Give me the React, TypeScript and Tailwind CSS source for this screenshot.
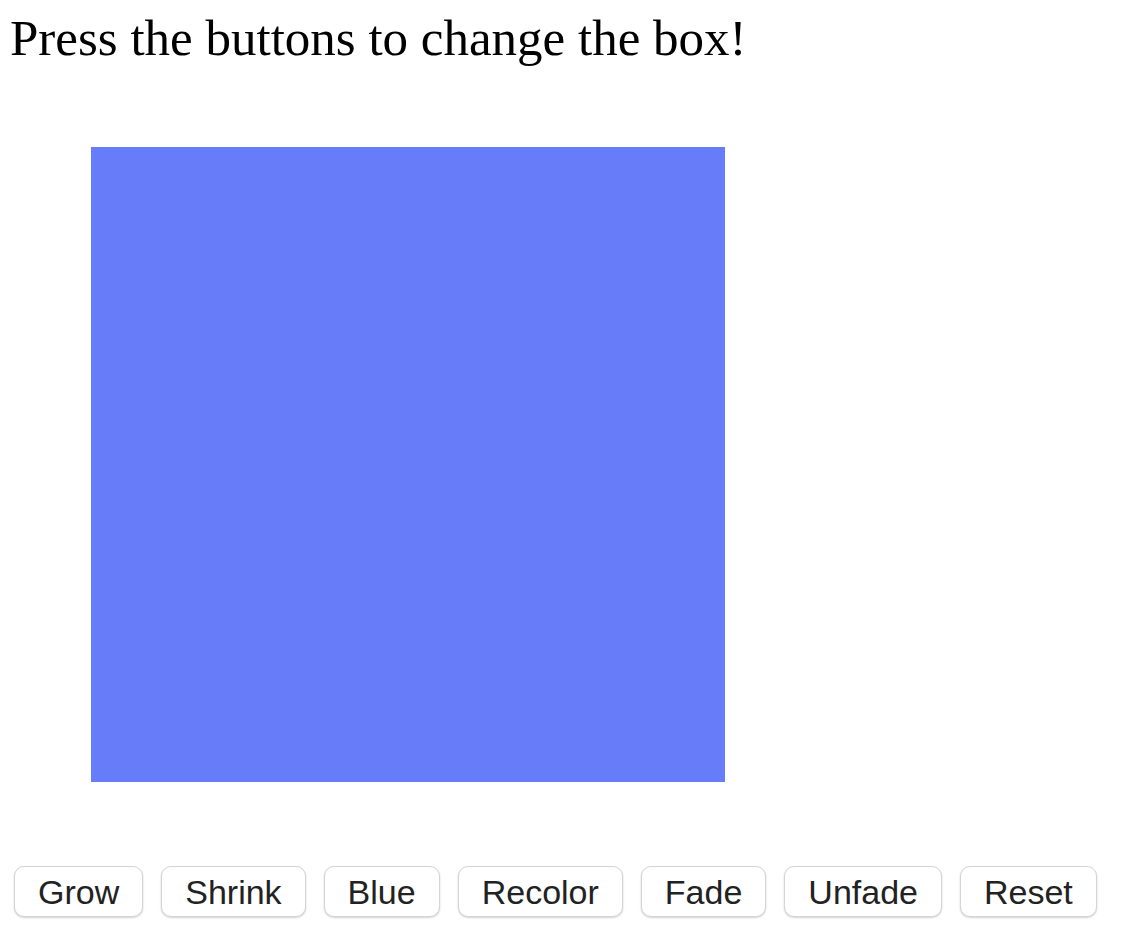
import { useState } from 'react'

const buttons = ['Grow', 'Shrink', 'Blue', 'Recolor', 'Fade', 'Unfade', 'Reset']

export default function App() {
  const [label] = useState('Press the buttons to change the box!')

  return (
    <div className="min-h-screen bg-white">
      <h1 className="pl-[10px] pt-[10px] text-[51px] leading-[57px] font-normal text-black font-['Liberation_Serif','Times_New_Roman',serif]">
        {label}
      </h1>

      {/* the box */}
      <div className="ml-[91px] mt-[80px] h-[635px] w-[634px] bg-[#677cf9]" />

      {/* controls */}
      <div className="mt-[84px] flex gap-[18px] pl-[14px]">
        {buttons.map((name) => (
          <button
            key={name}
            className="h-[51px] rounded-[10px] border border-[#d4d4d4] bg-white px-[23px] text-[34px] leading-none text-[#222] shadow-[0_1px_2px_rgba(0,0,0,0.18)] font-['Liberation_Sans',Arial,sans-serif]"
          >
            {name}
          </button>
        ))}
      </div>
    </div>
  )
}
